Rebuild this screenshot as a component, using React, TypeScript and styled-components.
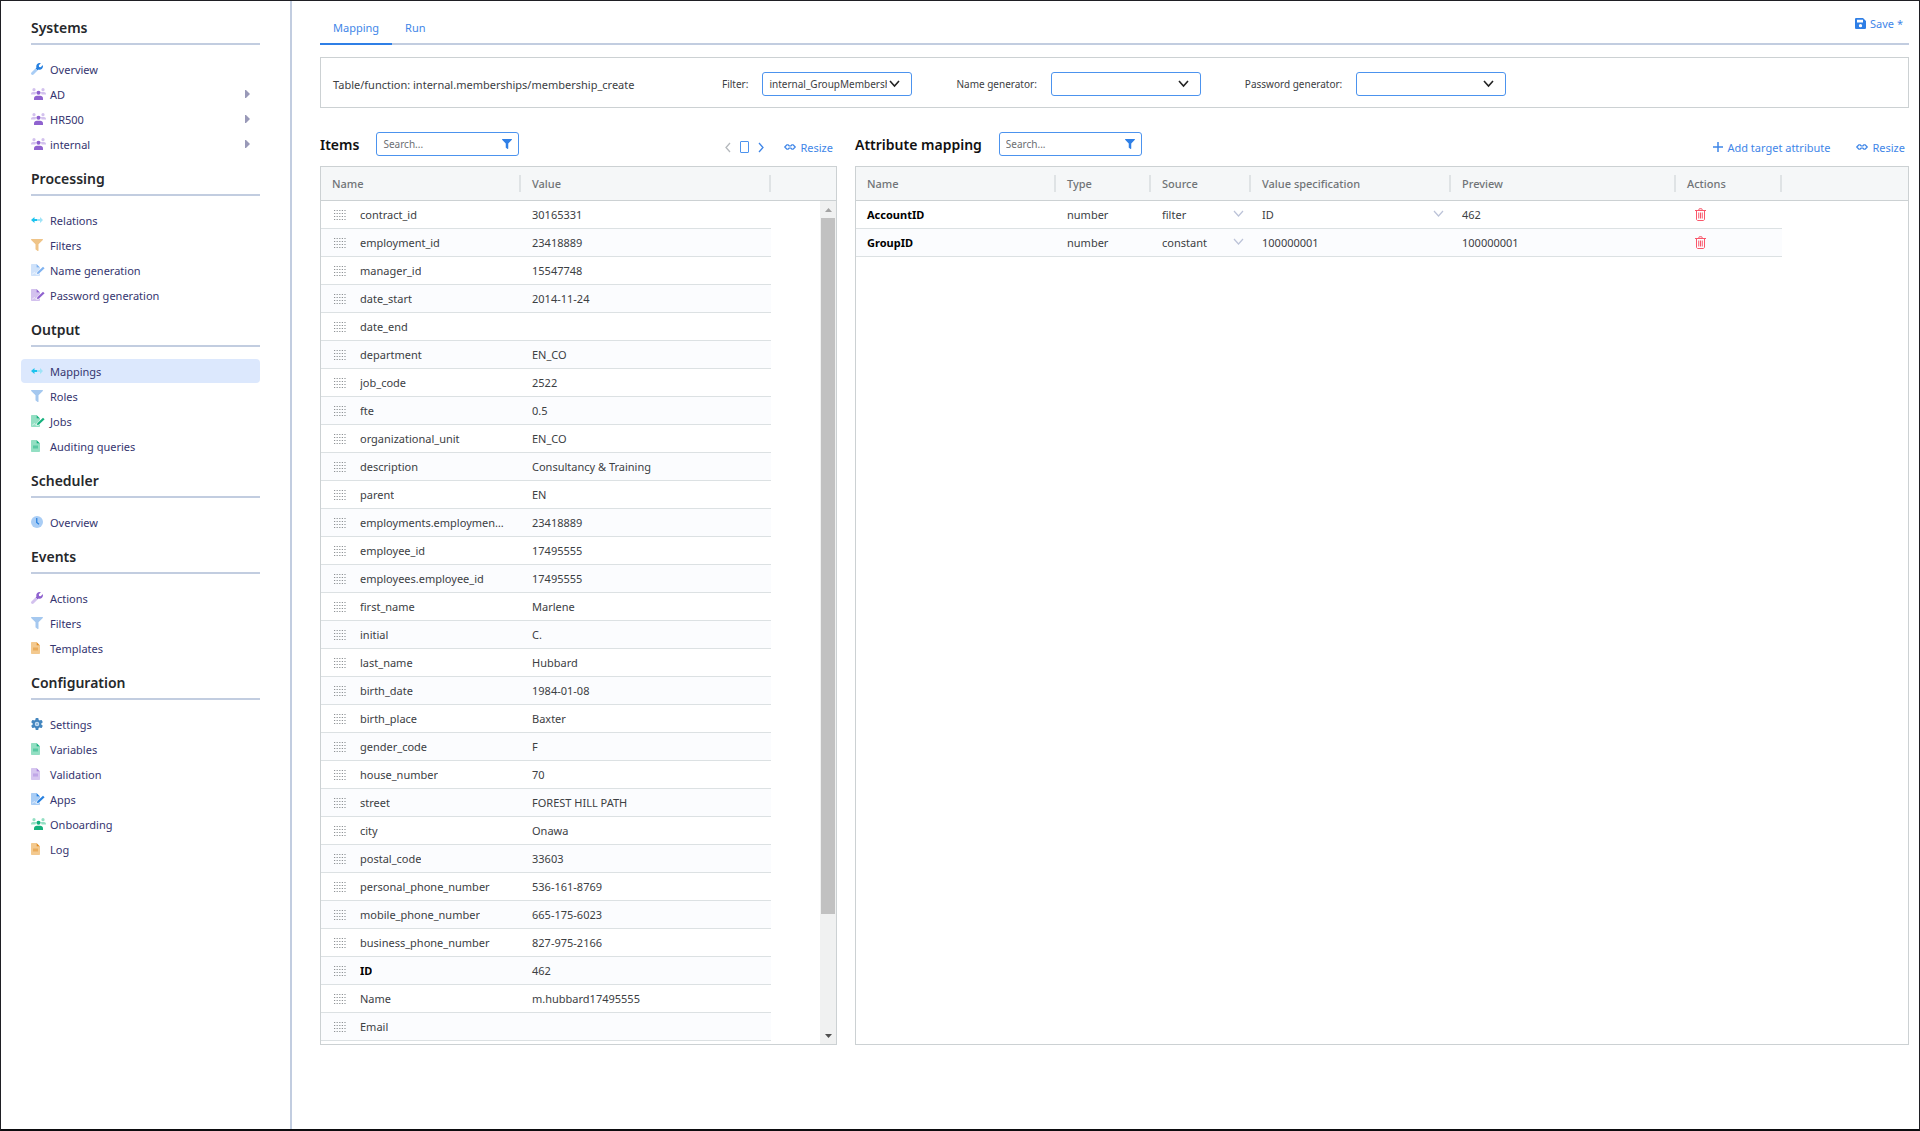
import React from 'react';
import styled, { createGlobalStyle } from 'styled-components';

const color = {
  frame: '#1f1f24',
  text: '#3c4043',
  nav: '#35356f',
  heading: '#26282b',
  muted: '#707477',
  rule: '#c2cde0',
  border: '#ccd1d3',
  rowLine: '#dce1e3',
  primary: '#2f7fe6',
  link: '#3f86e8',
  inputBorder: '#4c93ee',
  danger: '#f9576b',
};

const GlobalStyle = createGlobalStyle`
  * { box-sizing: border-box; }
  body { margin: 0; background: #fff; }
  body, button, input, select {
    font-family: "Noto Sans", "Open Sans", sans-serif;
    font-size: 11px;
    color: ${color.text};
  }
  button { background: none; border: 0; padding: 0; cursor: pointer; }
  svg { display: block; flex: none; }
`;

/* ---------- page frame ---------- */

const Page = styled.div`
  display: flex;
  min-height: 100vh;
  border: 1px solid ${color.frame};
  border-bottom: 2px solid #0c0c0f;
`;

const Sidebar = styled.nav`
  flex: 0 0 291px;
  padding: 4px 30px 24px 20px;
  border-right: 2px solid ${color.rule};
`;

const Main = styled.main`
  flex: 1;
  min-width: 0;
  display: flex;
  flex-direction: column;
  padding: 0 10px 84px 28px;
`;

/* ---------- sidebar ---------- */

const GroupTitle = styled.h2`
  margin: 11px 0 12px 10px;
  padding-bottom: 3px;
  border-bottom: 2px solid ${color.rule};
  font-size: 14px;
  font-weight: 600;
  line-height: 24px;
  color: ${color.heading};
`;

const NavList = styled.ul`
  list-style: none;
  margin: 0;
  padding: 0;
`;

const NavLink = styled.a<{ $active?: boolean }>`
  display: flex;
  align-items: center;
  height: 24px;
  margin-bottom: 1px;
  padding: 0 10px;
  border-radius: 4px;
  text-decoration: none;
  color: ${color.nav};
  background: ${(p) => (p.$active ? '#dce8fd' : 'transparent')};
`;

const NavIcon = styled.span`
  flex: 0 0 19px;
`;

const NavLabel = styled.span`
  flex: 1;
`;

/* ---------- tabs ---------- */

const TabBar = styled.div`
  display: flex;
  justify-content: space-between;
  align-items: flex-start;
  height: 44px;
  border-bottom: 2px solid ${color.rule};
`;

const Tabs = styled.div`
  display: flex;
  padding-top: 11px;
`;

const Tab = styled.button<{ $active?: boolean }>`
  height: 33px;
  padding: 0 13px;
  border-bottom: 2px solid ${(p) => (p.$active ? color.primary : 'transparent')};
  color: ${color.link};
`;

const LinkButton = styled.button`
  display: flex;
  align-items: center;
  gap: 4px;
  height: 24px;
  color: ${color.link};
`;

const SaveArea = styled.div`
  padding: 10px 6px 0 0;
`;

/* ---------- filter strip ---------- */

const FilterStrip = styled.form`
  display: flex;
  align-items: center;
  gap: 44px;
  margin-top: 12px;
  padding: 14px 12px 11px;
  border: 1px solid ${color.border};
`;

const StripTitle = styled.div`
  flex: 0 0 345px;
  white-space: nowrap;
`;

const Field = styled.label`
  display: flex;
  align-items: center;
  gap: 14px;
  font-size: 10px;
  white-space: nowrap;
`;

const SelectBox = styled.span`
  position: relative;
  display: flex;
  width: 150px;
  svg {
    position: absolute;
    top: 8px;
    right: 12px;
    pointer-events: none;
  }
`;

const StripSelect = styled.select`
  appearance: none;
  width: 100%;
  height: 24px;
  padding: 0 24px 0 6px;
  border: 1px solid ${color.inputBorder};
  border-radius: 3px;
  background: #fff;
  font-size: 10px;
`;

/* ---------- panels ---------- */

const Columns = styled.div`
  flex: 1;
  display: grid;
  grid-template-columns: 517fr 1054fr;
  gap: 18px;
  margin-top: 24px;
`;

const Section = styled.section`
  display: flex;
  flex-direction: column;
  min-width: 0;
`;

const SectionBar = styled.div`
  display: flex;
  align-items: flex-start;
  height: 34px;
`;

const SectionTitle = styled.h2`
  margin: 0 17px 0 0;
  font-size: 14px;
  font-weight: 600;
  line-height: 26px;
  color: #111;
`;

const SearchBox = styled.label`
  display: flex;
  align-items: center;
  width: 143px;
  height: 24px;
  padding: 0 6px;
  border: 1px solid ${color.inputBorder};
  border-radius: 3px;
`;

const SearchInput = styled.input`
  flex: 1;
  min-width: 0;
  padding: 0;
  border: 0;
  outline: 0;
  font-size: 10px;
  &::placeholder { color: #6c6f73; }
`;

const Tools = styled.div<{ $gap: number }>`
  display: flex;
  align-items: center;
  gap: ${(p) => p.$gap}px;
  margin-left: auto;
  padding: 3px 4px 0 0;
`;

const Pager = styled.div`
  display: flex;
  align-items: center;
  gap: 9px;
`;

const Panel = styled.div`
  position: relative;
  flex: 1;
  border: 1px solid ${color.border};
`;

const Grid = styled.table`
  width: 100%;
  table-layout: fixed;
  border-collapse: separate;
  border-spacing: 0;
`;

const HeadCell = styled.th`
  height: 34px;
  padding: 0 0 0 11px;
  border-bottom: 1px solid ${color.border};
  background: #f5f7f8;
  text-align: left;
  font-weight: 500;
  color: ${color.muted};
`;

const HeadLabel = styled.span`
  display: block;
  line-height: 17px;
  border-right: 2px solid #dfe3e5;
`;

const BodyRow = styled.tr`
  &:nth-child(even) td:not(:last-child) { background: #fbfcfe; }
`;

const Cell = styled.td<{ $bold?: boolean }>`
  height: 28px;
  padding: 0 11px;
  border-bottom: 1px solid ${color.rowLine};
  white-space: nowrap;
  overflow: hidden;
  text-overflow: ellipsis;
  font-weight: ${(p) => (p.$bold ? 700 : 400)};
  color: ${(p) => (p.$bold ? '#000' : color.text)};
`;

const Filler = styled.td`
  padding: 0;
`;

const ItemName = styled.div`
  display: flex;
  align-items: center;
  gap: 14px;
  padding: 0 4px 0 2px;
`;

const Ellipsis = styled.span`
  overflow: hidden;
  text-overflow: ellipsis;
`;

const CellSelectBox = styled.div`
  position: relative;
  display: flex;
  svg {
    position: absolute;
    right: 7px;
    top: 4px;
    pointer-events: none;
  }
`;

const CellSelect = styled.select`
  appearance: none;
  width: 100%;
  height: 17px;
  padding: 0;
  border: 0;
  background: transparent;
`;

const CellInput = styled.input`
  display: block;
  width: 100%;
  height: 17px;
  padding: 0;
  border: 0;
  background: transparent;
`;

const ControlCell = styled(Cell)`
  padding: 0 0 0 11px;
`;

const DeleteButton = styled.button`
  display: block;
  margin-left: 8px;
`;

/* ---------- scrollbar ---------- */

const ScrollTrack = styled.div`
  position: absolute;
  top: 34px;
  right: 0;
  bottom: 0;
  display: flex;
  flex-direction: column;
  align-items: center;
  width: 16px;
  background: #f0f1f1;
`;

const ScrollEnd = styled.div`
  display: grid;
  place-items: center;
  flex: 0 0 17px;
`;

const ScrollRail = styled.div`
  flex: 1;
  width: 14px;
`;

const ScrollThumb = styled.div`
  height: 86%;
  background: #c1c1c1;
`;

/* ---------- icons ---------- */

const WRENCH =
  'M507.73 109.1c-2.24-9.03-13.54-12.09-20.12-5.51l-74.36 74.36-67.88-11.31-11.31-67.88 74.36-74.36c6.62-6.62 3.43-17.9-5.66-20.16-47.38-11.74-99.55.91-136.58 37.93-39.64 39.64-50.55 97.1-34.05 147.2L18.74 402.76c-24.99 24.99-24.99 65.51 0 90.5 24.99 24.99 65.51 24.99 90.5 0l213.21-213.21c50.12 16.71 107.47 5.68 147.37-34.22 37.07-37.07 49.7-89.32 37.91-136.73z';

const FUNNEL =
  'M487.976 0H24.028C2.71 0-8.047 25.866 7.058 40.971L192 225.941V432c0 7.831 3.821 15.17 10.237 19.662l80 55.98C298.02 518.69 320 507.493 320 487.98V225.941l184.947-184.97C520.021 25.896 509.338 0 487.976 0z';

type Tone = { dark: string; light: string };

const WrenchIcon = ({ dark, light }: Tone) => {
  const id = React.useId();
  return (
    <svg width="12" height="12" viewBox="0 0 512 512">
      <defs>
        <linearGradient id={id} x1="0" y1="1" x2="1" y2="0">
          <stop offset="0.46" stopColor={light} />
          <stop offset="0.46" stopColor={dark} />
        </linearGradient>
      </defs>
      <path d={WRENCH} fill={`url(#${id})`} />
    </svg>
  );
};

const UsersIcon = ({ dark, light }: Tone) => (
  <svg width="15" height="12" viewBox="0 0 30 24">
    <g fill={light}>
      <circle cx="6" cy="3.4" r="3.2" />
      <circle cx="24" cy="3.4" r="3.2" />
      <path d="M0 13v-1c0-2.400 1.800-4 4-4h4c1 0 1.800.3 2.500.8-.9 1.200-1.400 2.600-1.500 4.200z" />
      <path d="M30 13v-1c0-2.400-1.800-4-4-4h-4c-1 0-1.800.3-2.500.8.9 1.200 1.400 2.600 1.500 4.200z" />
    </g>
    <g fill={dark}>
      <circle cx="15" cy="9.500" r="4.200" />
      <path d="M6 24v-3c0-3.300 2.500-5.500 5.500-5.500h7c3 0 5.500 2.200 5.500 5.500v3z" />
    </g>
  </svg>
);

const ArrowsIcon = ({ dark, light }: Tone) => (
  <svg width="12" height="8" viewBox="0 0 24 16">
    <path fill={light} d="M24 8l-6-6v4h-6v4h6v4z" />
    <path fill={dark} d="M0 8l7-6v4h5v4H7v4z" />
  </svg>
);

const FunnelIcon = ({ fill, size = 12 }: { fill: string; size?: number }) => (
  <svg width={size} height={size} viewBox="0 0 512 512">
    <path fill={fill} d={FUNNEL} />
  </svg>
);

const FileIcon = ({ dark, light }: Tone) => (
  <svg width="9" height="12" viewBox="0 0 18 24">
    <path fill={light} d="M1.500 0H11v7h7v15.500c0 .8-.7 1.500-1.500 1.500h-15C.7 24 0 23.300 0 22.500v-21C0 .7.7 0 1.500 0z" />
    <path fill={dark} d="M11 0l7 7h-7z" />
    <path fill={dark} opacity=".45" d="M4 11h10v6H4z" />
  </svg>
);

const FileSignIcon = ({ dark, light }: Tone) => (
  <svg width="14" height="12" viewBox="0 0 28 24">
    <path
      fill={light}
      d="M1.500 0H11v7h7v3l-7 7v4h4l3-2.500v4c0 .8-.7 1.500-1.500 1.500h-15C.7 24 0 23.300 0 22.500v-21C0 .7.7 0 1.500 0z"
    />
    <path fill={dark} d="M11 0l7 7h-7z" />
    <path fill={dark} d="M24 5.500l3.200 3.200L15.500 19.500 12 20l.5-3.500z" />
    <path fill="none" stroke="#fff" strokeOpacity=".8" strokeWidth="1.500" d="M2.500 20.500c2 0 2.500-3.500 4-3.500s1.500 3.500 4.500 3.500" />
  </svg>
);

const ClockIcon = ({ dark, light }: Tone) => (
  <svg width="12" height="12" viewBox="0 0 24 24">
    <circle cx="12" cy="12" r="12" fill={light} />
    <path fill="none" stroke={dark} strokeWidth="2.500" d="M11.500 4v9l4.500 3.500" />
  </svg>
);

const CogIcon = ({ dark, light }: Tone) => (
  <svg width="12" height="12" viewBox="0 0 24 24">
    <g fill={dark}>
      <circle cx="12" cy="12" r="8.800" />
      {[0, 60, 120].map((a) => (
        <rect key={a} x="9" y="0" width="6" height="24" rx="1.500" transform={`rotate(${a} 12 12)`} />
      ))}
    </g>
    <circle cx="12" cy="12" r="4.500" fill={light} />
    <circle cx="12" cy="12" r="2" fill={dark} opacity=".5" />
  </svg>
);

const CaretIcon = () => (
  <svg width="5" height="8" viewBox="0 0 5 8">
    <path fill="#9999b8" d="M0 0h1l4 4-4 4H0z" />
  </svg>
);

const ChevronIcon = ({ stroke, width = 1.6 }: { stroke: string; width?: number }) => (
  <svg width="11" height="8" viewBox="0 0 11 8">
    <path fill="none" stroke={stroke} strokeWidth={width} d="M1 1l4.500 5L10 1" />
  </svg>
);

const PagerChevron = ({ stroke, next }: { stroke: string; next?: boolean }) => (
  <svg width="6" height="11" viewBox="0 0 6 11">
    <path fill="none" stroke={stroke} strokeWidth="1.300" d={next ? 'M1 1l4 4.500L1 10' : 'M5 1L1 5.500 5 10'} />
  </svg>
);

const PageIcon = () => (
  <svg width="9" height="12" viewBox="0 0 9 12">
    <rect x=".5" y=".5" width="8" height="11" rx=".5" fill="none" stroke={color.inputBorder} />
  </svg>
);

const ResizeIcon = () => (
  <svg width="12" height="8" viewBox="0 0 24 16">
    <g fill="none" stroke={color.link} strokeWidth="2.400" strokeLinejoin="round">
      <path d="M1.500 8L6 3.500h2L10.500 6h3L16 3.500h2L22.500 8 18 12.500h-2L13.500 10h-3L8 12.500H6z" />
    </g>
  </svg>
);

const PlusIcon = () => (
  <svg width="10" height="10" viewBox="0 0 10 10">
    <path stroke={color.link} strokeWidth="1.500" d="M5 0v10M0 5h10" />
  </svg>
);

const SaveIcon = () => (
  <svg width="11" height="11" viewBox="0 0 22 22">
    <path
      fill={color.primary}
      fillRule="evenodd"
      d="M2.500 0H16l6 6v13.500c0 1.400-1.100 2.500-2.500 2.500h-17C1.100 22 0 20.900 0 19.500v-17C0 1.100 1.100 0 2.500 0zM4 3.500V9h12V3.500zM11 12a3.300 3.300 0 100 6.600 3.300 3.300 0 000-6.600z"
    />
  </svg>
);

const TrashIcon = () => (
  <svg width="11" height="13" viewBox="0 0 22 26">
    <g fill="none" stroke={color.danger} strokeWidth="2">
      <path d="M0 5h22M7 5l1.500-3.500h5L15 5" />
      <path d="M3 5v17c0 1.700 1 3 2.500 3h11c1.500 0 2.500-1.300 2.500-3V5M7.500 9v12M11 9v12M14.500 9v12" />
    </g>
  </svg>
);

const DragIcon = () => (
  <svg width="12" height="10" viewBox="0 0 12 10">
    {[0, 3, 6, 9].map((y) =>
      [0, 2.6, 5.2, 7.8, 10.4].map((x) => (
        <rect key={`${x}-${y}`} x={x} y={y} width="1.200" height="1" fill="#8d9194" />
      )),
    )}
  </svg>
);

const ScrollArrow = ({ up }: { up?: boolean }) => (
  <svg width="7" height="4" viewBox="0 0 7 4">
    <path fill={up ? '#a3a3a3' : '#505050'} d={up ? 'M0 4L3.500 0 7 4z' : 'M0 0h7L3.500 4z'} />
  </svg>
);

/* ---------- data ---------- */

const purple: Tone = { dark: '#8f62cf', light: '#d3c1ee' };
const blue: Tone = { dark: '#2680e0', light: '#a9cdf5' };
const paleBlue: Tone = { dark: '#7fb2f0', light: '#cfe2fa' };
const cyan: Tone = { dark: '#1cc3ee', light: '#9fe3f7' };
const green: Tone = { dark: '#14b07c', light: '#93dfc3' };
const orange: Tone = { dark: '#e08a1e', light: '#f3c98f' };
const softPurple: Tone = { dark: '#a67fdb', light: '#d6c6f0' };
const steel: Tone = { dark: '#4486bf', light: '#c4dcf2' };

type NavItem = { label: string; icon: React.ReactNode; active?: boolean; expandable?: boolean };

const navGroups: { title: string; items: NavItem[] }[] = [
  {
    title: 'Systems',
    items: [
      { label: 'Overview', icon: <WrenchIcon {...blue} /> },
      { label: 'AD', icon: <UsersIcon {...purple} />, expandable: true },
      { label: 'HR500', icon: <UsersIcon {...purple} />, expandable: true },
      { label: 'internal', icon: <UsersIcon {...purple} />, expandable: true },
    ],
  },
  {
    title: 'Processing',
    items: [
      { label: 'Relations', icon: <ArrowsIcon {...cyan} /> },
      { label: 'Filters', icon: <FunnelIcon fill="#efc488" /> },
      { label: 'Name generation', icon: <FileSignIcon {...paleBlue} /> },
      { label: 'Password generation', icon: <FileSignIcon {...purple} /> },
    ],
  },
  {
    title: 'Output',
    items: [
      { label: 'Mappings', icon: <ArrowsIcon {...cyan} />, active: true },
      { label: 'Roles', icon: <FunnelIcon fill="#a5c8ef" /> },
      { label: 'Jobs', icon: <FileSignIcon {...green} /> },
      { label: 'Auditing queries', icon: <FileIcon {...green} /> },
    ],
  },
  { title: 'Scheduler', items: [{ label: 'Overview', icon: <ClockIcon {...blue} /> }] },
  {
    title: 'Events',
    items: [
      { label: 'Actions', icon: <WrenchIcon {...purple} /> },
      { label: 'Filters', icon: <FunnelIcon fill="#a5c8ef" /> },
      { label: 'Templates', icon: <FileIcon {...orange} /> },
    ],
  },
  {
    title: 'Configuration',
    items: [
      { label: 'Settings', icon: <CogIcon {...steel} /> },
      { label: 'Variables', icon: <FileIcon {...green} /> },
      { label: 'Validation', icon: <FileIcon {...softPurple} /> },
      { label: 'Apps', icon: <FileSignIcon {...blue} /> },
      { label: 'Onboarding', icon: <UsersIcon {...green} /> },
      { label: 'Log', icon: <FileIcon {...orange} /> },
    ],
  },
];

const items: [string, string][] = [
  ['contract_id', '30165331'],
  ['employment_id', '23418889'],
  ['manager_id', '15547748'],
  ['date_start', '2014-11-24'],
  ['date_end', ''],
  ['department', 'EN_CO'],
  ['job_code', '2522'],
  ['fte', '0.5'],
  ['organizational_unit', 'EN_CO'],
  ['description', 'Consultancy & Training'],
  ['parent', 'EN'],
  ['employments.employment_id', '23418889'],
  ['employee_id', '17495555'],
  ['employees.employee_id', '17495555'],
  ['first_name', 'Marlene'],
  ['initial', 'C.'],
  ['last_name', 'Hubbard'],
  ['birth_date', '1984-01-08'],
  ['birth_place', 'Baxter'],
  ['gender_code', 'F'],
  ['house_number', '70'],
  ['street', 'FOREST HILL PATH'],
  ['city', 'Onawa'],
  ['postal_code', '33603'],
  ['personal_phone_number', '536-161-8769'],
  ['mobile_phone_number', '665-175-6023'],
  ['business_phone_number', '827-975-2166'],
  ['ID', '462'],
  ['Name', 'm.hubbard17495555'],
  ['Email', ''],
];

/* ---------- composite parts ---------- */

const GridHead = ({ labels }: { labels: string[] }) => (
  <thead>
    <tr>
      {labels.map((l) => (
        <HeadCell key={l} scope="col">
          <HeadLabel>{l}</HeadLabel>
        </HeadCell>
      ))}
      <HeadCell as="td" />
    </tr>
  </thead>
);

const Widths = ({ values }: { values: number[] }) => (
  <colgroup>
    {values.map((w, i) => (
      <col key={i} width={w} />
    ))}
    <col />
  </colgroup>
);

const StripField = ({ label, option }: { label: string; option?: string }) => (
  <Field>
    {label}
    <SelectBox>
      <StripSelect>
        <option>{option}</option>
      </StripSelect>
      <ChevronIcon stroke="#222" />
    </SelectBox>
  </Field>
);

const Search = ({ label }: { label: string }) => (
  <SearchBox>
    <SearchInput type="text" placeholder="Search..." aria-label={label} />
    <FunnelIcon fill={color.primary} size={10} />
  </SearchBox>
);

const InlineSelect = ({ label, value, options }: { label: string; value: string; options: string[] }) => (
  <CellSelectBox>
    <CellSelect aria-label={label} defaultValue={value}>
      {options.map((o) => (
        <option key={o}>{o}</option>
      ))}
    </CellSelect>
    <ChevronIcon stroke="#bcc3d8" width={1.2} />
  </CellSelectBox>
);

const ResizeButton = () => (
  <LinkButton type="button">
    <ResizeIcon />
    Resize
  </LinkButton>
);

const MappingRow = ({
  name,
  source,
  preview,
  children,
}: {
  name: string;
  source: string;
  preview: string;
  children: React.ReactNode;
}) => (
  <BodyRow>
    <Cell $bold>{name}</Cell>
    <Cell>number</Cell>
    <ControlCell>
      <InlineSelect label={`${name} source`} value={source} options={['filter', 'constant']} />
    </ControlCell>
    <ControlCell>{children}</ControlCell>
    <Cell>{preview}</Cell>
    <Cell>
      <DeleteButton type="button" aria-label={`Delete ${name}`}>
        <TrashIcon />
      </DeleteButton>
    </Cell>
    <Filler />
  </BodyRow>
);

export default function App() {
  return (
    <>
      <GlobalStyle />
      <Page>
        <Sidebar>
          {navGroups.map((group) => (
            <React.Fragment key={group.title}>
              <GroupTitle>{group.title}</GroupTitle>
              <NavList>
                {group.items.map((item) => (
                  <li key={item.label}>
                    <NavLink href="#" $active={item.active}>
                      <NavIcon>{item.icon}</NavIcon>
                      <NavLabel>{item.label}</NavLabel>
                      {item.expandable && <CaretIcon />}
                    </NavLink>
                  </li>
                ))}
              </NavList>
            </React.Fragment>
          ))}
        </Sidebar>

        <Main>
          <TabBar>
            <Tabs role="tablist">
              <Tab type="button" role="tab" aria-selected $active>
                Mapping
              </Tab>
              <Tab type="button" role="tab" aria-selected={false}>
                Run
              </Tab>
            </Tabs>
            <SaveArea>
              <LinkButton type="button">
                <SaveIcon />
                Save *
              </LinkButton>
            </SaveArea>
          </TabBar>

          <FilterStrip>
            <StripTitle>Table/function: internal.memberships/membership_create</StripTitle>
            <StripField label="Filter:" option="internal_GroupMemberships" />
            <StripField label="Name generator:" />
            <StripField label="Password generator:" />
          </FilterStrip>

          <Columns>
            <Section>
              <SectionBar>
                <SectionTitle>Items</SectionTitle>
                <Search label="Search items" />
                <Tools $gap={20}>
                  <Pager>
                    <button type="button" aria-label="Previous page">
                      <PagerChevron stroke="#b4b8bc" />
                    </button>
                    <button type="button" aria-label="Current page">
                      <PageIcon />
                    </button>
                    <button type="button" aria-label="Next page">
                      <PagerChevron stroke={color.link} next />
                    </button>
                  </Pager>
                  <ResizeButton />
                </Tools>
              </SectionBar>
              <Panel>
                <Grid>
                  <Widths values={[200, 250]} />
                  <GridHead labels={['Name', 'Value']} />
                  <tbody>
                    {items.map(([name, value]) => (
                      <BodyRow key={name}>
                        <Cell $bold={name === 'ID'}>
                          <ItemName>
                            <DragIcon />
                            <Ellipsis>{name}</Ellipsis>
                          </ItemName>
                        </Cell>
                        <Cell>{value}</Cell>
                        <Filler />
                      </BodyRow>
                    ))}
                  </tbody>
                </Grid>
                <ScrollTrack>
                  <ScrollEnd>
                    <ScrollArrow up />
                  </ScrollEnd>
                  <ScrollRail>
                    <ScrollThumb />
                  </ScrollRail>
                  <ScrollEnd>
                    <ScrollArrow />
                  </ScrollEnd>
                </ScrollTrack>
              </Panel>
            </Section>

            <Section>
              <SectionBar>
                <SectionTitle>Attribute mapping</SectionTitle>
                <Search label="Search attributes" />
                <Tools $gap={26}>
                  <LinkButton type="button">
                    <PlusIcon />
                    Add target attribute
                  </LinkButton>
                  <ResizeButton />
                </Tools>
              </SectionBar>
              <Panel>
                <Grid>
                  <Widths values={[200, 95, 100, 200, 225, 106]} />
                  <GridHead labels={['Name', 'Type', 'Source', 'Value specification', 'Preview', 'Actions']} />
                  <tbody>
                    <MappingRow name="AccountID" source="filter" preview="462">
                      <InlineSelect label="AccountID value specification" value="ID" options={['ID', 'Name', 'Email']} />
                    </MappingRow>
                    <MappingRow name="GroupID" source="constant" preview="100000001">
                      <CellInput aria-label="GroupID value specification" defaultValue="100000001" />
                    </MappingRow>
                  </tbody>
                </Grid>
              </Panel>
            </Section>
          </Columns>
        </Main>
      </Page>
    </>
  );
}
